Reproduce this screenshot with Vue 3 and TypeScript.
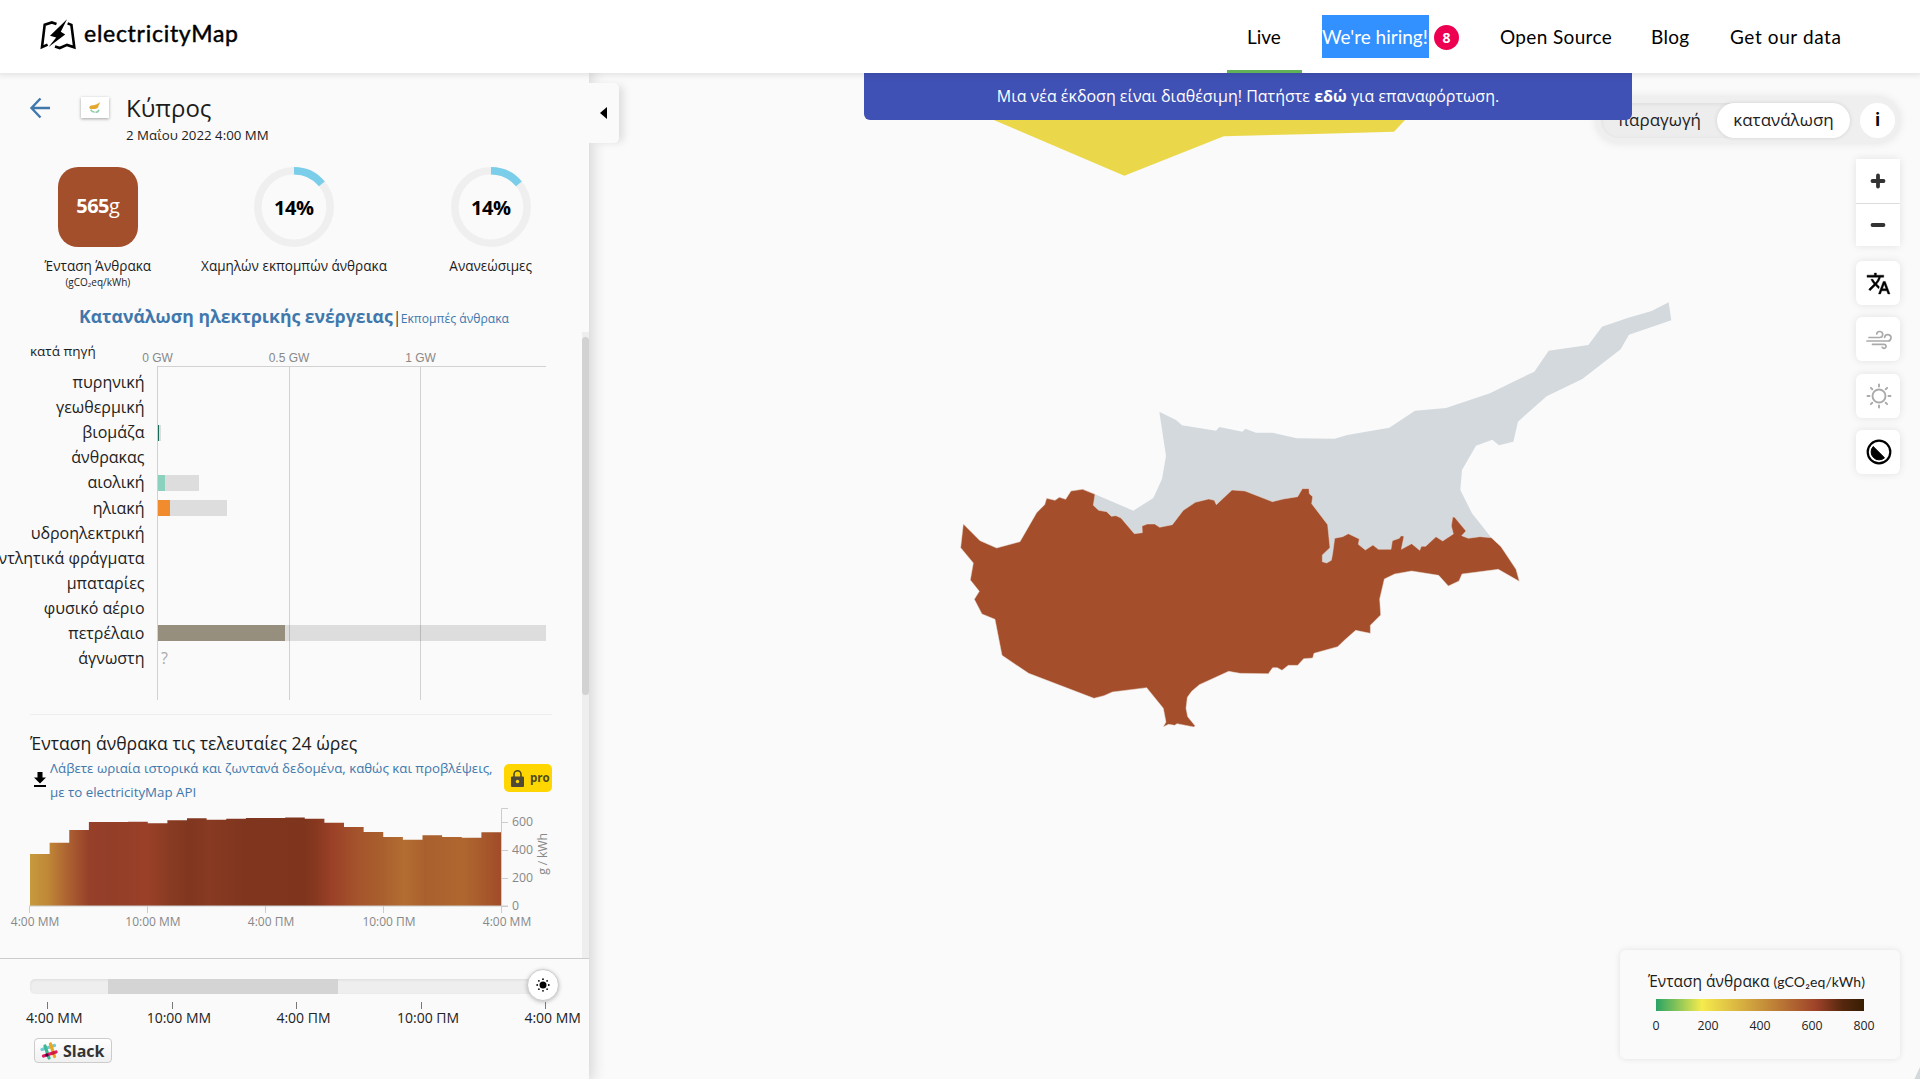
<script setup lang="ts">
interface Source { name: string; value?: number; capacity?: number; color?: string; unknown?: boolean }

const sources: Source[] = [
  { name: 'πυρηνική' },
  { name: 'γεωθερμική' },
  { name: 'βιομάζα', value: 1, capacity: 3, color: '#166a57' },
  { name: 'άνθρακας' },
  { name: 'αιολική', value: 7, capacity: 41, color: '#8bd1bd' },
  { name: 'ηλιακή', value: 12, capacity: 69, color: '#f08c2e' },
  { name: 'υδροηλεκτρική' },
  { name: 'αντλητικά φράγματα' },
  { name: 'μπαταρίες' },
  { name: 'φυσικό αέριο' },
  { name: 'πετρέλαιο', value: 127, capacity: 388, color: '#968f7d' },
  { name: 'άγνωστη', unknown: true },
]

const powerTicks = [
  { x: 157.5, label: '0 GW' },
  { x: 289, label: '0.5 GW' },
  { x: 420.5, label: '1 GW' },
]

const hours = ['4:00 ΜΜ', '10:00 ΜΜ', '4:00 ΠΜ', '10:00 ΠΜ', '4:00 ΜΜ']

// Height in pixels of each hourly step above the time axis
const steps = [52, 63.3, 76, 84, 84, 84.3, 82.7, 85.7, 87.7, 86.3, 87.3, 88, 88.1, 88.6, 87.3, 83.3, 79, 74, 69, 66.3, 70.7, 69, 68.3, 73.7]
const stepWidth = 471 / steps.length
const areaPath = 'M0 98' + steps.map((h, i) => `V${(98 - h).toFixed(1)}H${((i + 1) * stepWidth).toFixed(2)}`).join('') + 'V98Z'

const stops = [
  ['0%', '#c79a3d'], ['4%', '#bf8637'], ['8%', '#ad6231'], ['12.5%', '#96402a'], ['17%', '#933e28'], ['25%', '#9a4028'],
  ['30%', '#873b22'], ['34%', '#80361f'], ['38%', '#883a22'], ['46%', '#7f351e'], ['58%', '#7e341d'], ['61%', '#87391f'], ['64%', '#9b4028'],
  ['70%', '#a5552c'], ['75%', '#aa602e'], ['79.5%', '#b36d31'], ['84%', '#aa602e'], ['92%', '#b0672f'], ['100%', '#a04c29'],
]

const intensityTicks = [
  { y: 98, v: 0 }, { y: 70, v: 200 }, { y: 42, v: 400 }, { y: 14, v: 600 },
]
const legendTicks = [0, 200, 400, 600, 800]
const rays = [0, 45, 90, 135, 180, 225, 270, 315]
</script>

<template>
  <div class="app">
    <header class="header">
      <svg class="logo" width="204" height="40" viewBox="0 0 204 40">
        <g fill="none" stroke="#000" stroke-width="2.600">
          <path d="M16.500 9 11.800 7.400 4.700 9.700 2 32.200 7.600 29.600" />
          <path d="M15 31.400 19.800 33 27 29.900 34.300 32.300 31.400 9.900 27.600 8.400" />
        </g>
        <path d="M27 4.300 10 20.700 16.200 22.600 8.600 32 25.200 19.600 20.800 16.700Z" fill="#000" />
        <text x="44" y="27" textLength="154" lengthAdjust="spacing" class="wordmark">electricityMap</text>
      </svg>
      <nav class="nav">
        <a class="active"><span class="n-live">Live</span></a>
        <a class="hiring"><span class="selected">We're hiring!</span><b class="count">8</b></a>
        <a><span class="n-open">Open Source</span></a>
        <a><span class="n-blog">Blog</span></a>
        <a><span class="n-data">Get our data</span></a>
      </nav>
    </header>

    <main class="main">
      <svg class="map" width="1920" height="1006" viewBox="0 73 1920 1006">
        <path fill="#ebd84a" d="M960 98 993.7 120 1124.3 175.7 1223.8 136.3 1314 134 1394 131.7 1405 120V98Z" />
        <path fill="#d3d8dc" d="M1920 1067 1914 1080H1920Z" />
        <g transform="translate(940 380) scale(.33333)">
          <path fill="#d4d9dd" d="M658 95 708 120 726 136 828 152 838 141 907 155 916 146 948 158 998 158 1070 175 1184 176 1222 165 1348 143 1425 92 1518 84 1650 40 1720 5 1783 -25 1826 -88 1945 -105 1986 -160 2065 -187 2135 -207 2186 -233 2194 -179 2067 -136 2042 -92 1927 -3 1820 49 1734 125 1720 185 1677 196 1657 179 1608 197 1566 270 1561 330 1596 400 1654 473 1620 505 1140 570 580 500 440 400 465 343 580 392 640 354 666 297 678 228Z" />
          <path fill="#a44e2b" stroke="#e6d8d0" stroke-width="1.5" d="M70 432 120 482 170 504 240 485 290 398 314 374 320 355 345 361 358 352 377 358 393 333 428 328 465 343 460 376 476 391 500 395 514 409 528 407 543 414 583 461 607 458 606 438 622 432 644 432 659 442 697 434 730 391 766 367 806 357 823 361 829 374 876 330 915 333 997 365 1030 357 1073 350 1087 326 1107 326 1108 341 1118 350 1115 371 1163 434 1170 503 1147 525 1147 545 1160 549 1174 541 1178 520 1184 475 1208 470 1225 461 1258 477 1255 493 1276 510 1299 495 1315 508 1353 508 1357 482 1378 475 1383 467 1392 469 1384 508 1415 491 1439 511 1444 499 1457 499 1488 470 1508 483 1540 462 1534 438 1538 411 1544 412 1578 453 1565 467 1585 475 1620 470 1654 473 1683 500 1728 568 1738 604 1675 568 1566 582 1557 603 1525 618 1496 586 1415 573 1364 582 1333 597 1319 657 1322 705 1291 736 1291 760 1247 751 1214 780 1193 800 1122 820 1118 834 1091 836 1073 856 1045 856 1026 871 1012 863 998 863 985 881 900 880 866 874 778 914 755 934 742 952 738 985 743 1010 765 1037 762 1041 711 1031 704 1036 686 1033 670 1040 678 1026 670 985 620 923 517 936 492 947 462 955 266 880 186 826 165 718 126 702 103 658 118 634 91 600 100 549 62 503Z" />
        </g>
      </svg>

      <aside class="panel">
        <div class="zone-head">
          <svg class="back" width="22" height="22" viewBox="0 0 22 22" fill="none" stroke="#4178ac" stroke-width="2.4"><path d="M21 11H3M11.5 1.5 2.5 11l9 9.5" /></svg>
          <div class="flag">
            <svg width="14" height="13" viewBox="0 0 16 14">
              <path d="M1.500 7.500C1.200 4.700 4 4.500 6.500 4.300 9 4 11 3 14 .8 13.300 3 12 4.300 11.800 6 11.300 8.300 8 8.700 6 8.600 4 9 3 9 1.500 7.500Z" fill="#e5a82e" />
              <path d="M3 9.500C4 11.500 5.500 12.300 7.500 12.500M12.500 9.500C12 11.500 10.500 12.300 8.500 12.500" stroke="#8fcdab" stroke-width="1.800" fill="none" />
            </svg>
          </div>
          <div class="zone-title">
            <h1>Κύπρος</h1>
            <p>2 Μαΐου 2022 4:00 ΜΜ</p>
          </div>
        </div>

        <div class="gauges">
          <div class="gauge">
            <div class="square"><span><b>565</b>g</span></div>
            <p>Ένταση Άνθρακα</p>
            <small>(gCO₂eq/kWh)</small>
          </div>
          <div v-for="label in ['Χαμηλών εκπομπών άνθρακα', 'Ανανεώσιμες']" :key="label" class="gauge">
            <svg width="80" height="80" viewBox="0 0 80 80">
              <circle cx="40" cy="40" r="36.200" fill="none" stroke="#efefef" stroke-width="7.600" />
              <path d="M40 3.800A36.200 36.200 0 0 1 67.900 16.900" fill="none" stroke="#7acee9" stroke-width="7.600" />
              <text x="39.800" y="47.500" text-anchor="middle" class="pct">14%</text>
            </svg>
            <p>{{ label }}</p>
          </div>
        </div>

        <div class="tabs"><b>Κατανάλωση ηλεκτρικής ενέργειας</b><i>|</i><span>Εκπομπές άνθρακα</span></div>

        <div class="scroll">
          <div class="thumb"></div>
          <svg class="power" width="582" height="370" viewBox="0 332 582 370">
            <text x="30" y="356" class="by">κατά πηγή</text>
            <g v-for="(s, i) in sources" :key="s.name">
              <rect v-if="s.capacity" x="158" :y="375 + i * 25" :width="s.capacity" height="16" fill="#ddd" />
            </g>
            <g stroke="#000" stroke-opacity=".16">
              <line x1="157" x2="546" y1="366.500" y2="366.500" />
              <line v-for="t in powerTicks" :key="t.x" :x1="Math.floor(t.x) + 0.5" :x2="Math.floor(t.x) + 0.5" y1="367" y2="700" />
            </g>
            <text v-for="t in powerTicks" :key="t.label" :x="t.x" y="362" class="axis" text-anchor="middle">{{ t.label }}</text>
            <g v-for="(s, i) in sources" :key="s.name">
              <text x="144.500" :y="388 + i * 25.100" class="src" text-anchor="end">{{ s.name }}</text>
              <rect v-if="s.value" x="158" :y="375 + i * 25" :width="s.value" height="16" :fill="s.color" />
              <text v-if="s.unknown" x="161" y="664" class="unknown">?</text>
            </g>
          </svg>
          <hr>
          <h2>Ένταση άνθρακα τις τελευταίες 24 ώρες</h2>
          <div class="api">
            <svg width="12" height="16" viewBox="0 0 12 16"><path d="M3.500 0h5v5.500H12L6 11.500 0 5.500h3.500ZM0 13h12v2H0Z" /></svg>
            <a>Λάβετε ωριαία ιστορικά και ζωντανά δεδομένα, καθώς και προβλέψεις,<br>με το electricityMap API</a>
            <span class="pro">
              <svg width="13" height="17" viewBox="0 0 13 17"><path fill="none" stroke="#4e4a20" stroke-width="1.600" d="M3 7V4.300a3.500 3.500 0 0 1 7 0V7" /><path fill="#4e4a35" d="M1 6.500h11a1 1 0 0 1 1 1V16a1 1 0 0 1-1 1H1a1 1 0 0 1-1-1V7.500a1 1 0 0 1 1-1Z" /><circle cx="6.500" cy="11.500" r="1.700" fill="#ffd600" /></svg>
              <b>pro</b>
            </span>
          </div>
          <svg class="intensity" width="582" height="140" viewBox="0 808 582 140">
            <defs>
              <linearGradient id="carbon"><stop v-for="s in stops" :key="s[0]" :offset="s[0]" :stop-color="s[1]" /></linearGradient>
            </defs>
            <g transform="translate(30 808)">
              <path :d="areaPath" fill="url(#carbon)" />
              <g fill="none" stroke="#ccc">
                <path d="M478 .5h-6.500V98M-1 98H478" />
                <path v-for="t in intensityTicks" :key="t.v" :d="`M471.5 ${t.y + 0.5}h6.500`" />
                <path v-for="(h, i) in hours" :key="i" :d="`M${-0.5 + i * 118} 98v7`" />
              </g>
              <text v-for="t in intensityTicks" :key="t.v" x="482" :y="t.y + 4" class="num">{{ t.v }}</text>
              <text transform="translate(517 46) rotate(-90)" text-anchor="middle" class="num unit">g / kWh</text>
              <text v-for="(h, i) in hours" :key="i" :x="5 + i * 118" y="118" text-anchor="middle" class="time">{{ h }}</text>
            </g>
          </svg>
        </div>

        <footer class="foot">
          <div class="slider">
            <div class="night"></div>
            <div class="knob">
              <svg width="14" height="14" viewBox="-7 -7 14 14"><circle r="3.500" /><circle v-for="r in rays" :key="r" r=".9" cx="5.800" :transform="`rotate(${r})`" /></svg>
            </div>
          </div>
          <div class="hours"><span v-for="(h, i) in hours" :key="i">{{ h }}</span></div>
          <button class="slack">
            <svg width="18" height="18" viewBox="0 0 18 18" stroke-width="3.200" stroke-linecap="round">
              <path d="M2 7.500 14.500 3.500" stroke="#70cadb" /><path d="M5 4 9 16" stroke="#3eb890" /><path d="M10.500 2 14.500 14.500" stroke="#e9a820" />
              <path d="M3.500 14 16 10" stroke="#e01765" /><path d="M6.800 13h.2" stroke="#361238" /><path d="M13 11h.2" stroke="#cc2027" />
            </svg>
            Slack
          </button>
        </footer>
        <div class="collapse"><svg width="7" height="12" viewBox="0 0 7 12"><path d="M7 0v12L0 6Z" /></svg></div>
      </aside>

      <div class="controls">
        <div class="mode">
          <div class="switch"><span class="prod">παραγωγή</span><span class="on">κατανάλωση</span></div>
          <span class="info">i</span>
        </div>
        <div class="zoom">
          <button><svg width="16" height="16" viewBox="0 0 16 16" stroke="#333" stroke-width="3.800" stroke-linecap="round"><path d="M2.500 8h11M8 2.500v11" /></svg></button>
          <button><svg width="16" height="16" viewBox="0 0 16 16" stroke="#333" stroke-width="3.800" stroke-linecap="round"><path d="M2.500 8h11" /></svg></button>
        </div>
        <button class="tool"><svg width="25" height="25" viewBox="0 0 24 24"><path d="M12.870 15.070l-2.540-2.510.03-.03A17.520 17.520 0 0 0 14.070 6H17V4h-7V2H8v2H1v1.990h11.170C11.500 7.920 10.440 9.750 9 11.350 8.070 10.320 7.300 9.190 6.690 8h-2c.73 1.630 1.730 3.170 2.980 4.560l-5.090 5.020L4 19l5-5 3.110 3.110.76-2.040zM18.500 10h-2L12 22h2l1.120-3h4.750L21 22h2l-4.500-12zm-2.620 7 1.620-4.330L19.120 17h-3.240z" stroke="#000" stroke-width=".4" /></svg></button>
        <button class="tool"><svg width="26" height="20" viewBox="0 0 26 20" fill="none" stroke="#aaa" stroke-width="1.700" stroke-linecap="round"><path d="M3 7.500H13.500A3 3 0 1 0 10.700 4M1 11H21.500A3.200 3.200 0 1 0 18.600 7.300M6.500 14.300H18A2 2 0 1 1 16.300 17.300" /></svg></button>
        <button class="tool"><svg width="26" height="26" viewBox="-13 -13 26 26" fill="none" stroke="#aaa" stroke-width="1.900" stroke-linecap="round"><circle r="6.500" /><path v-for="r in rays" :key="r" d="M9.500 0h2" :transform="`rotate(${r})`" /></svg></button>
        <button class="tool"><svg width="26" height="26" viewBox="-13 -13 26 26"><circle r="11.300" fill="none" stroke="#000" stroke-width="2.200" /><path d="M-5.800-5.500A8 8 0 0 0 5.500 5.800Z" stroke="#000" stroke-width="1" /></svg></button>
      </div>

      <section class="legend">
        <p>Ένταση άνθρακα <small>(gCO₂eq/kWh)</small></p>
        <div class="ramp"></div>
        <div class="nums"><span v-for="n in legendTicks" :key="n">{{ n }}</span></div>
      </section>

      <div class="banner"><span>Μια νέα έκδοση είναι διαθέσιμη! Πατήστε <b>εδώ</b> για επαναφόρτωση.</span></div>
    </main>
  </div>
</template>

<style>
html, body { margin: 0; overflow: hidden; background: #fff; }
</style>

<style scoped>
.app { width: 1920px; height: 1080px; overflow: hidden; display: flex; flex-direction: column; font-family: "Open Sans", "Noto Sans", sans-serif; color: #000; }
.app * { box-sizing: border-box; }
p, h1, h2 { margin: 0; font-weight: 400; white-space: nowrap; color: #1c1c1c; }
button { border: 0; padding: 0; font: inherit; }
.header { height: 73px; flex: none; background: #fff; display: flex; justify-content: space-between; box-shadow: 0 0 6px 2px rgba(0, 0, 0, .1); position: relative; z-index: 3; }
.logo { margin: 15px 0 0 40px; overflow: visible; }
.wordmark { font: 400 23px Lato, sans-serif; stroke: #000; stroke-width: .45px; }
.nav { display: flex; margin-right: 60px; font-family: Lato, sans-serif; font-size: 19px; font-weight: 400; white-space: nowrap; }
.nav a { height: 73px; padding: 0 20px; display: flex; align-items: center; }
.nav .active { border-bottom: 3px solid #60b158; padding-top: 3px; }
.nav .hiring { padding-right: 21px; }
.n-live { width: 35px; }
.selected { background: #3390ff; color: #fff; height: 43px; line-height: 43px; width: 107px; }
.count { width: 25px; height: 25px; margin: 2px 0 0 5px; border-radius: 50%; background: #ed0052; color: #fff; font: 700 14px/25px "Open Sans", sans-serif; text-align: center; }
.n-open { width: 111px; letter-spacing: .35px; }
.n-blog { width: 39px; letter-spacing: .3px; }
.n-data { width: 110px; letter-spacing: .6px; }

.main { height: 1006px; flex: none; position: relative; background: #fafafa; overflow: hidden; }
.map { position: absolute; left: 0; top: 0; }
.panel { position: relative; width: 589px; height: 1006px; background: #fafafa; box-shadow: 0 0 14px 3px rgba(0, 0, 0, .16); display: flex; flex-direction: column; }
.collapse { position: absolute; left: 589px; top: 10px; width: 30px; height: 60px; background: #fafafa; border-radius: 0 5px 5px 0; display: flex; align-items: center; padding-left: 11px; box-shadow: 6px 1px 9px -2px rgba(0, 0, 0, .12); }
.zone-head { height: 94px; display: flex; padding: 0 0 0 29px; }
.back { margin-top: 24px; }
.flag { margin: 24px 0 0 30px; width: 28px; height: 21px; background: #fff; box-shadow: 0 1px 3px rgba(0, 0, 0, .35); display: flex; align-items: center; justify-content: center; }
.zone-title { margin: 18px 0 0 17px; }
.zone-title h1 { font-size: 24px; line-height: 34px; }
.zone-title p { font-size: 13.300px; line-height: 20px; }
.gauges { height: 136px; display: flex; }
.gauge { width: 197px; display: flex; flex-direction: column; align-items: center; font-size: 13.550px; }
.gauge:first-child { width: 196px; }
.gauge p { line-height: 20px; margin-top: 9px; }
.gauge small { font-size: 10px; line-height: 13px; color: #1c1c1c; }
.gauge svg { flex: none; }
.square { width: 80px; height: 80px; flex: none; border-radius: 20px; background: #a44f2c; color: #fff; font-size: 20px; line-height: 24px; padding-bottom: 2px; display: flex; align-items: center; justify-content: center; letter-spacing: -.5px; }
.pct { font-size: 20px; font-weight: 700; letter-spacing: -.5px; }
.tabs { height: 29px; padding-left: 79px; color: #4178ac; white-space: nowrap; display: flex; align-items: baseline; line-height: 27px; }
.tabs b { font-size: 17.600px; }
.tabs i { font-style: normal; color: #333; font-size: 16px; width: 8px; text-align: center; }
.tabs span { font-size: 12.150px; }
.scroll { position: relative; width: 589px; height: 626px; border-right: 7px solid #eee; flex: none; }
.thumb { position: absolute; left: 582px; top: 5px; width: 7px; height: 358px; border-radius: 4px; background: #d2d2d2; }
.power { display: block; }
.by { font-size: 13.500px; fill: #1c1c1c; }
.axis { font: 12px "Liberation Sans", sans-serif; fill: #888; }
.src { font-size: 16px; fill: #222; }
.unknown { font-size: 16px; fill: #aaa; }
hr { border: 0; border-top: 1px solid #eee; width: 522px; margin: 12px 0 0 30px; }
h2 { font-size: 17.600px; line-height: 24px; margin: 16px 0 0 30px; }
.api { height: 53px; padding-left: 34px; display: flex; align-items: flex-start; }
.api > svg { margin-top: 17px; }
.api a { width: 454px; margin: 1px 0 0 4px; font-size: 13.300px; line-height: 24px; color: #4178ac; white-space: nowrap; }
.pro { width: 48px; height: 28px; margin-top: 9px; border-radius: 5px; background: #ffd600; display: flex; align-items: center; padding-left: 7px; gap: 6px; font-size: 11.500px; line-height: 16px; color: #4e4a20; }
.pro b { margin-top: -1px; }
.intensity { display: block; overflow: visible; }
.num { font-size: 12.300px; fill: #888; }
.unit { letter-spacing: -.2px; }
.time { font-size: 12px; fill: #888; }
.foot { height: 121px; flex: none; border-top: 1px solid #ccc; padding-left: 30px; }
.slider { position: relative; margin-top: 20px; width: 522px; height: 15px; border-radius: 5px; background: #eee; box-shadow: inset 0 1px 3px rgba(0, 0, 0, .08); }
.night { margin-left: 78px; width: 230px; height: 15px; background: #d4d4d4; }
.knob { position: absolute; left: 497px; top: -10px; width: 32px; height: 32px; border-radius: 50%; background: #fff; border: 1px solid #ccc; box-shadow: 0 1px 4px rgba(0, 0, 0, .25); display: flex; align-items: center; justify-content: center; }
.hours { display: flex; margin: 8px 0 0 -38px; width: 623px; font-size: 14px; color: #222; }
.hours span { width: 124.600px; text-align: center; line-height: 18px; padding: 7px 0 1px 0; position: relative; white-space: nowrap; }
.hours span::before { content: ""; position: absolute; left: 55px; top: 0; width: 1px; height: 7px; background: #777; }
.slack { margin: 10px 0 0 4px; width: 78px; height: 25px; border: 1px solid #ccc; border-radius: 4px; background: linear-gradient(#fff, #f0f0f0); display: flex; align-items: center; padding-left: 5px; gap: 5px; font-size: 16px; font-weight: 700; color: #333; }

.controls { position: absolute; right: 20px; top: 24px; display: flex; flex-direction: column; align-items: flex-end; }
.mode { width: 304px; height: 46px; border-radius: 23px; background: #efefef; box-shadow: 0 0 10px rgba(0, 0, 0, .1); display: flex; align-items: center; padding-left: 5px; font-size: 17px; color: #222; }
.switch { width: 249px; height: 35px; border-radius: 18px; background: #ededed; box-shadow: inset 0 1px 4px rgba(0, 0, 0, .08); display: flex; align-items: center; justify-content: space-between; padding-left: 17px; }
.prod { margin-top: -1px; }
.on { width: 133px; height: 35px; line-height: 34px; border-radius: 18px; background: #fff; text-align: center; box-shadow: 0 0 4px rgba(0, 0, 0, .12); }
.info { margin-left: 10px; width: 35px; height: 35px; line-height: 34px; border-radius: 50%; background: #fff; text-align: center; font-weight: 700; color: #000; }
.zoom { margin: 16px 0 15px; box-shadow: 0 0 8px rgba(0, 0, 0, .1); border-radius: 3px; }
.zoom button, .tool { width: 44px; height: 43px; background: #fff; display: flex; align-items: center; justify-content: center; }
.zoom button:first-child { height: 45px; border-bottom: 1px solid #ddd; }
.zoom button:last-child { height: 42px; }
.tool { height: 44px; margin-bottom: 12.300px; border-radius: 6px; box-shadow: 0 0 8px rgba(0, 0, 0, .1); padding: 1px 0 0 1px; }
.legend { position: absolute; right: 20px; top: 877px; width: 280px; height: 109px; border-radius: 6px; background: #fafafa; box-shadow: 0 0 6px rgba(0, 0, 0, .1); padding: 19px 0 0 28px; color: #222; }
.legend p { font-size: 15.500px; line-height: 24px; height: 24px; }
.legend p small { font-family: Lato, sans-serif; font-size: 14px; letter-spacing: .1px; }
.ramp { margin: 6px 0 0 8px; width: 208px; height: 12px; background: linear-gradient(90deg, #2aa364 0, #f5eb4d 22%, #9e4229 77%, #53270d 90%, #381d02 100%); }
.nums { display: flex; width: 260px; margin: 5px 0 0 -18px; font: 12.300px/20px "Open Sans", sans-serif; }
.nums span { width: 52px; text-align: center; }
.banner { position: absolute; left: 864px; top: 0; width: 768px; height: 47px; border-radius: 0 0 6px 6px; background: #3f51b5; color: #fff; display: flex; align-items: center; justify-content: center; font-size: 16px; white-space: nowrap; padding-bottom: 2px; z-index: 2; }
</style>
